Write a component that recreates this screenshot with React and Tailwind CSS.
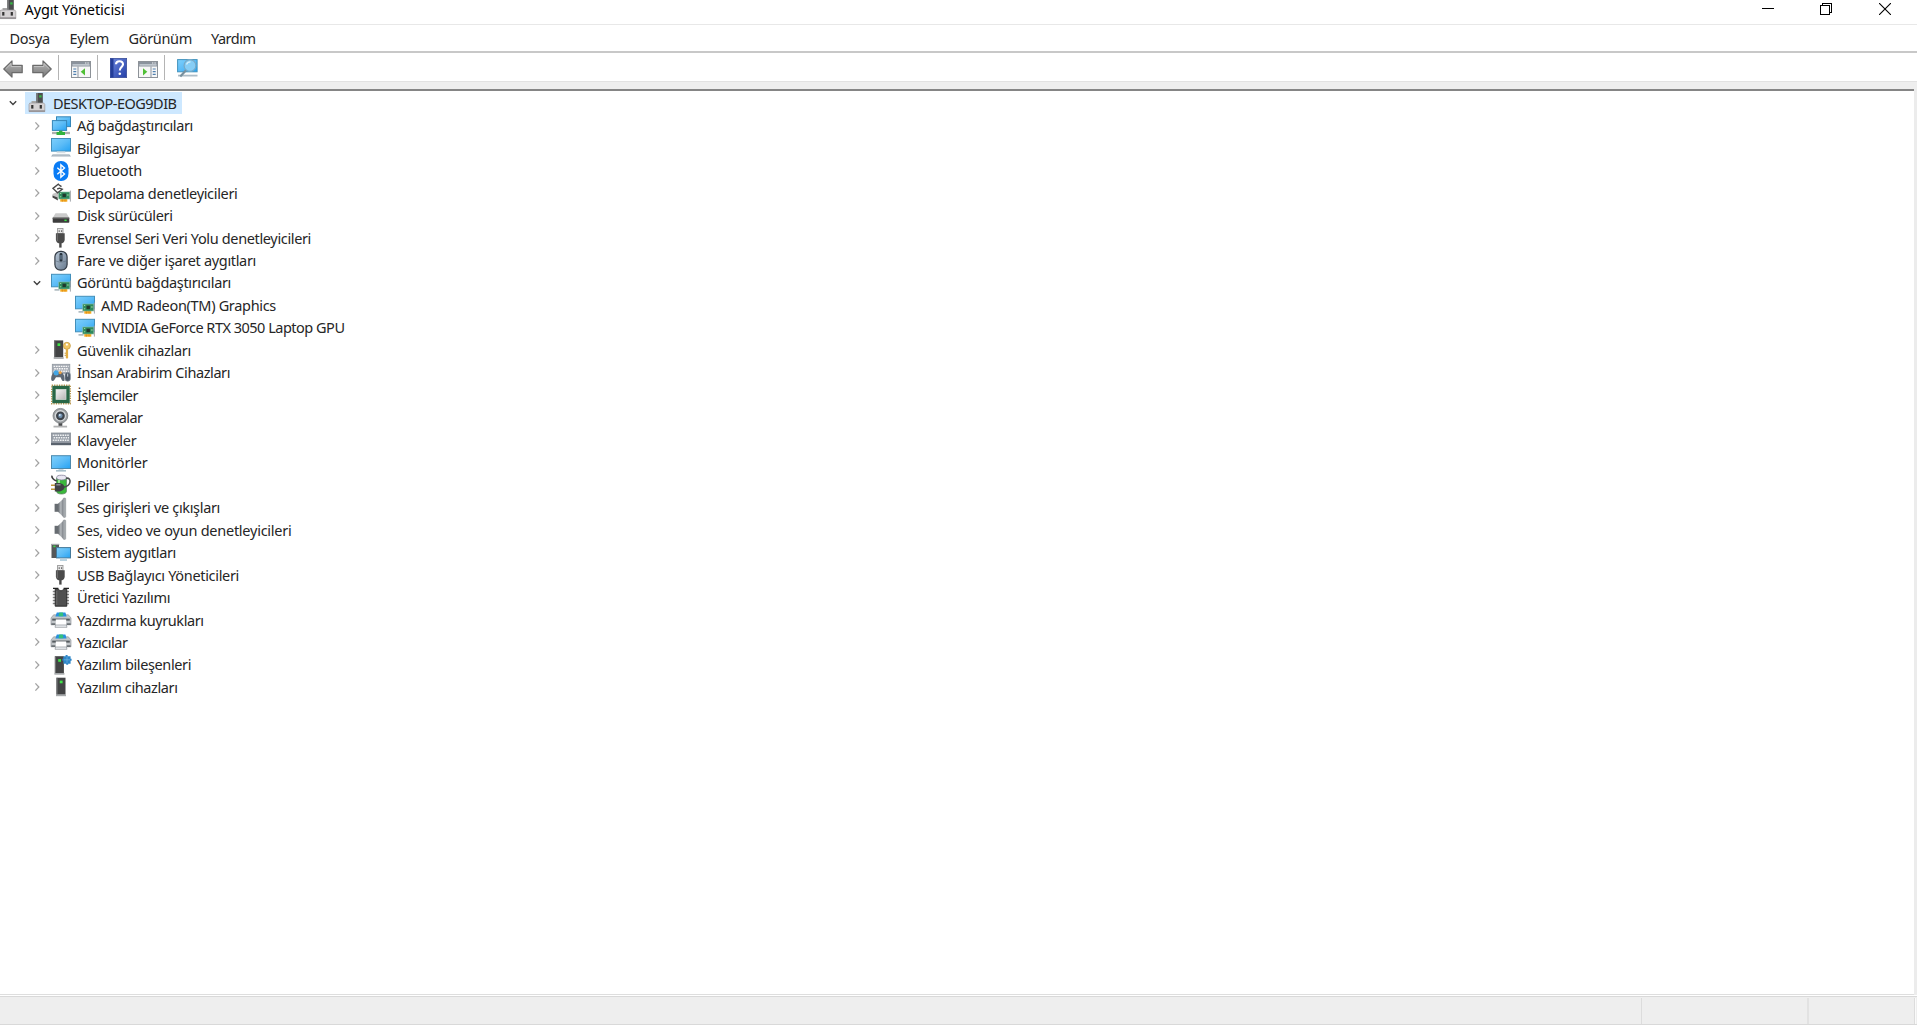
import { useLayoutEffect, useRef } from "react";

function Label({ children, width, size = "text-[14.5px]", className = "" }) {
  const ref = useRef(null);
  useLayoutEffect(() => {
    const el = ref.current;
    const fit = () => {
      el.style.letterSpacing = "0px";
      const natural = el.getBoundingClientRect().width;
      el.style.letterSpacing = `${(width - natural) / el.textContent.length}px`;
    };
    fit();
    document.fonts?.ready.then(fit);
  }, [width]);
  return (
    <span ref={ref} className={`inline-block whitespace-pre ${size} ${className}`}>
      {children}
    </span>
  );
}

const Svg = ({ children, className = "h-5 w-5" }) => (
  <svg viewBox="0 0 20 20" className={`${className} block shrink-0 overflow-visible`} fill="none">
    {children}
  </svg>
);

const Defs = () => (
  <svg className="absolute h-0 w-0">
    <defs>
      <linearGradient id="blue" x1="0" y1="0" x2="1" y2="1">
        <stop offset="0" stopColor="#7fd0fb" />
        <stop offset=".5" stopColor="#5cbcf7" />
        <stop offset="1" stopColor="#25a2f3" />
      </linearGradient>
      <linearGradient id="horn" x1="0" y1="0" x2="1" y2="0">
        <stop offset="0" stopColor="#62676c" />
        <stop offset=".5" stopColor="#b4b8bc" />
        <stop offset="1" stopColor="#74797e" />
      </linearGradient>
      <linearGradient id="arrow" x1="0" y1="0" x2="0" y2="1">
        <stop offset="0" stopColor="#b8b8b8" />
        <stop offset="1" stopColor="#787878" />
      </linearGradient>
      <linearGradient id="help" x1="0" y1="0" x2="1" y2="1">
        <stop offset="0" stopColor="#6d87dc" />
        <stop offset="1" stopColor="#2440a8" />
      </linearGradient>
      <linearGradient id="mouse" x1="0" y1="0" x2="1" y2="1">
        <stop offset="0" stopColor="#b9c8d8" />
        <stop offset="1" stopColor="#66788c" />
      </linearGradient>
      <linearGradient id="silver" x1="0" y1="0" x2="1" y2="1">
        <stop offset="0" stopColor="#f4f4f4" />
        <stop offset="1" stopColor="#b5b5b5" />
      </linearGradient>
    </defs>
  </svg>
);

const Host = ({ className = "h-5 w-5" }) => (
  <Svg className={className}>
    <rect x="9.4" y="0" width="6.4" height="12" fill="#4b4d4e" />
    <rect x="9.4" y="0" width="1.6" height="12" fill="#727475" />
    <rect x="12.2" y="2.3" width="2.4" height="2.2" fill="#35b944" />
    <path d="M4.5 8h4.5v2.6H4.5z" fill="#a8a8a8" />
    <path d="M2.8 10h14l1 1.6v7H2v-7z" fill="#d5d2d4" stroke="#9c999b" strokeWidth=".7" />
    <path d="M2 17.2h16v1.8H2z" fill="#989598" />
    <rect x="4.2" y="12" width="2.2" height="3.6" fill="#343434" />
    <rect x="12.7" y="12" width="2.2" height="3.6" fill="#343434" />
  </Svg>
);

const Network = () => (
  <Svg>
    <rect x="5.5" y=".8" width="14" height="9.8" fill="url(#blue)" stroke="#3586b8" />
    <path d="M1 17h18" stroke="#b0b0b0" strokeWidth="2.3" />
    <rect x="1.4" y="4.6" width="14.2" height="9.8" fill="url(#blue)" stroke="#3586b8" />
    <path d="M8 14.8h3.4v1.3H14v2.8H5.5v-2.8H8z" fill="#31b33d" />
  </Svg>
);
const Computer = () => (
  <Svg>
    <rect x=".5" y=".5" width="19" height="12.6" fill="url(#blue)" stroke="#438eba" />
    <path d="M6 13.6h8l.6 1.6H5.4z" fill="#dbe1e5" />
    <path d="M2 16h16l2 2.6H0z" fill="#a3b0bb" />
    <path d="M1.8 16.8h16.4" stroke="#dce3e7" strokeWidth=".8" />
  </Svg>
);
const Monitor = () => (
  <Svg>
    <rect x=".5" y="2.7" width="19" height="12.8" fill="url(#blue)" stroke="#4b89ad" />
    <path d="M7.5 16h5v1.2h-5z" fill="#c6d4dc" />
    <path d="M5 17.2h10v1.3H5z" fill="#94b1bf" />
  </Svg>
);
const Bluetooth = () => (
  <Svg>
    <rect x="2.5" y="0" width="15" height="20" rx="7.2" fill="#0a7cf5" />
    <path d="m6.3 6.7 7.2 6.2-3.6 3.3V3.8l3.6 3.3-7.2 6.2" stroke="#fff" strokeWidth="1.4" />
  </Svg>
);
const Card = () => (
  <>
    <path d="M9.3 15.5h7v3.2h-7z" fill="#f5a81e" />
    <path d="M11.5 16v2.7M14 16v2.7" stroke="#c97d14" strokeWidth=".5" />
    <rect x="7.8" y="9" width="11" height="7" fill="#2f8a5e" stroke="#8dbfa2" strokeWidth=".6" />
    <rect x="11.5" y="10.7" width="3.4" height="3.4" fill="#21382d" />
    <path d="M9.2 10.5h1M9.2 13.8h1M16.2 12h1.4" stroke="#bde6a7" />
    <path d="M19.4 7.6v11" stroke="#9a9fa4" strokeWidth=".9" />
  </>
);
const Display = () => (
  <Svg>
    <rect x=".5" y="1.3" width="19" height="12.5" fill="url(#blue)" stroke="#438fba" />
    <path d="M3.5 16.9h5" stroke="#9cabb3" strokeWidth="1.4" />
    <Card />
  </Svg>
);
const Storage = () => (
  <Svg>
    <path d="m1.5 11 5-2 5 3-5 3.2-5-2.2z" fill="#c4c4c4" />
    <path d="m1.5 12.4 5 2 .5 3-5.5-3z" fill="#444" />
    <Card />
    <path d="M7.8.8 2 5.4l4.6 4.4 4.6-3.6-2.6-1-2.4.8" stroke="#484848" strokeWidth="1.4" />
    <path d="M7 1.2 10.5 3.6" stroke="#484848" strokeWidth="1.3" />
  </Svg>
);
const Disk = () => (
  <Svg>
    <path d="M4.5 7.3h11l2.8 4.4H1.7z" fill="#cbcbcb" />
    <rect x="1.7" y="11.5" width="16.6" height="5.3" rx=".7" fill="#3c3c3c" />
    <path d="M1.7 11.9h16.6" stroke="#858585" />
    <rect x="13.4" y="13.6" width="2.3" height="1.5" fill="#39e047" />
  </Svg>
);
const Usb = () => (
  <Svg>
    <rect x="6.6" y=".5" width="5.4" height="5" fill="#e4e4e4" stroke="#8e8e8e" strokeWidth=".8" />
    <path d="M8.2 2.3v1.6M10.6 2.3v1.6" stroke="#555" />
    <path d="M4.9 5.3h8.8v6.2c0 2-1.2 3.2-2.6 3.8H7.5c-1.4-.6-2.6-1.8-2.6-3.8z" fill="#4b4b4b" />
    <path d="M6.3 6v7" stroke="#747474" />
    <path d="M9.4 15v4.6" stroke="#484848" strokeWidth="2.4" />
  </Svg>
);
const Mouse = () => (
  <Svg>
    <rect x="3.9" y=".4" width="12.2" height="18.8" rx="5.6" fill="url(#mouse)" stroke="#333b45" strokeWidth="1.2" />
    <path d="M4 9.5c3.5 2 8.5 2 12 0" stroke="#5d6b79" strokeWidth=".6" />
    <rect x="8.6" y="2" width="2.8" height="8.4" rx="1.2" fill="#26303a" />
    <path d="M10 4v4.5" stroke="#87a5c2" strokeWidth=".9" />
  </Svg>
);
const Tower = () => (
  <>
    <rect x="5.5" y=".7" width="9" height="17" fill="#434445" />
    <path d="M6 .7v17" stroke="#707273" strokeWidth="1.2" />
    <path d="M5 17.5h10v1.7H5z" fill="#a5a8aa" />
    <rect x="8.8" y="3.6" width="2.8" height="2.7" fill="#3ee347" />
  </>
);
const Security = () => (
  <Svg>
    <g transform="translate(-2.3 -.3)">
      <Tower />
    </g>
    <circle cx="15.9" cy="5.8" r="3.5" fill="#f0c564" stroke="#c59a42" strokeWidth=".8" />
    <circle cx="15.9" cy="4.6" r="1.1" fill="#fff" />
    <path d="M14.8 9h2.3v8.4l-1.1 1.5-1.2-1.5z" fill="#e1ae46" />
    <path d="M13.6 13.2h1.5M13.6 15.3h1.5" stroke="#c59a42" />
  </Svg>
);
const Hid = () => (
  <Svg>
    <rect x="1.3" y="1.3" width="17.5" height="9" fill="#a5abb3" stroke="#9299a1" strokeWidth=".8" />
    <path d="M2.6 3.4h15M3.2 5.8h14M2.6 8.2h15" stroke="#f7f7f7" strokeWidth="1.4" strokeDasharray="1.6 .8" />
    <path d="M1.8 10.2c2-1.6 8-1.6 10 0 1.6 2.2 2 5 1.7 7.3-.8 1-2.2.6-2.7-.6l-1.3-2.7H5L3.3 17c-.8 1.2-2.6 1.2-3 0-.4-2.4.2-5 1.5-6.8z" fill="#5d6875" />
    <circle cx="5.2" cy="9.8" r="2.6" fill="#43a6e6" />
    <circle cx="9.2" cy="9.6" r="1.6" fill="#eaa24a" />
    <rect x="14" y="9.4" width="5.4" height="8.8" rx="2.5" fill="#4c5866" stroke="#8692a0" strokeWidth=".7" />
    <path d="M16.7 10.6v3" stroke="#c6cfda" />
  </Svg>
);
const Cpu = () => (
  <Svg>
    <rect x=".7" y=".2" width="18.6" height="18.6" stroke="#b7964e" strokeWidth="1.4" strokeDasharray="1.3 1.1" />
    <rect x="1.3" y=".8" width="17.4" height="17.4" fill="#286746" />
    <rect x="5" y="4.4" width="10" height="10" fill="url(#silver)" stroke="#d8dfdc" strokeWidth=".7" />
  </Svg>
);
const Camera = () => (
  <Svg>
    <path d="M7.5 14h3.8v4H7.5z" fill="#494b4d" />
    <path d="M2.5 18.6h13.6" stroke="#b1b2b3" strokeWidth="1.8" />
    <circle cx="9.4" cy="7.8" r="7.4" fill="#9ca0a3" stroke="#7b7f82" strokeWidth=".8" />
    <circle cx="9.4" cy="7.8" r="5.7" fill="#d5d8da" />
    <circle cx="9.4" cy="7.8" r="4.4" fill="#3e444b" />
    <circle cx="9.4" cy="7.8" r="2.2" fill="#7191af" />
    <circle cx="8.8" cy="7" r=".9" fill="#d8e8f7" />
  </Svg>
);
const Keyboard = () => (
  <Svg>
    <rect x=".4" y="3" width="19.2" height="11" fill="#959ca5" stroke="#8b929a" strokeWidth=".8" />
    <path d="M1.8 5.3h16.5M2.6 7.8h15.4M1.8 10.3h16.5" stroke="#eef0f2" strokeWidth="1.5" strokeDasharray="1.6 .8" />
    <path d="M0 12.9h20v2.3H0z" fill="#59626d" />
  </Svg>
);
const Battery = () => (
  <Svg>
    <path d="M5.6 3h9.8v13.6c0 3.2-9.8 3.2-9.8 0z" fill="#3ab93c" stroke="#4e7752" strokeWidth=".7" />
    <ellipse cx="10.5" cy="2.6" rx="4.9" ry="2.4" fill="#e9e7f2" stroke="#837f99" strokeWidth=".8" />
    <path d="M8 5v3.5" stroke="#a5e89c" strokeWidth="1.8" />
    <path d="M.9.6c-.3 3 2.2 4.4 4.8 5.4" stroke="#3d3e3f" strokeWidth="1.6" />
    <path d="M15 3.2c3-.6 4.4 1.4 4 3.8-.4 2.8-3.2 4.8-7 5.2" stroke="#4b4e50" strokeWidth="1.6" />
    <path d="M0 10.2h4.5M0 14.3h4.5" stroke="#bc963a" strokeWidth="1.5" />
    <path d="M3.8 8h3.6c3 0 6 1.6 6 4.2s-3 4.2-6 4.2H3.8z" fill="#3f4245" />
    <path d="M5.3 9.8h4.2" stroke="#989c9e" strokeWidth="1.2" />
  </Svg>
);
const Speaker = () => (
  <Svg>
    <rect x="3.6" y="5.8" width="3.6" height="8" fill="#676c71" />
    <path d="M7 5.8 12.6.4v18.8L7 13.8z" fill="url(#horn)" />
    <rect x="12.2" y="0" width="2.5" height="19.4" rx=".8" fill="#a3a8ac" stroke="#858a8e" strokeWidth=".5" />
  </Svg>
);
const System = () => (
  <Svg>
    <rect x=".5" y="1" width="7.5" height="14" fill="#55585a" />
    <path d="M.3 1.4h8" stroke="#a6aaad" strokeWidth="1.2" />
    <rect x="2.3" y="2.6" width="2.2" height="1.6" fill="#40d34b" />
    <rect x="5.5" y="4.6" width="14" height="10.3" fill="url(#blue)" stroke="#43799a" />
    <path d="M9 17h7" stroke="#a9c8d8" strokeWidth="1.6" />
  </Svg>
);
const Firmware = () => (
  <Svg>
    <path d="M1.8 3.5H18M1.8 6.5H18M1.8 9.5H18M1.8 12.5H18M1.8 15.5H18" stroke="#808080" strokeWidth="1.4" />
    <path d="M4.2 1.2h3.4c.4 2 4.4 2 4.8 0h3.4v17H4.2z" fill="#505050" stroke="#262626" strokeWidth=".9" />
    <path d="M2 .4h5.4M12.6.4H18" stroke="#222" strokeWidth="1.3" />
    <path d="M5.8 3v14" stroke="#747474" strokeWidth=".8" />
  </Svg>
);
const Printer = () => (
  <Svg>
    <path d="M2.6 4.8h14.8L20 8v6.8H0V8z" fill="#c2c6c9" stroke="#8a8f93" strokeWidth=".6" />
    <path d="M5.8 2.4h8.6l1.2 4.2H4.4z" fill="#2990de" />
    <path d="M8.3 2.4h3.6l.4 3.8H7.6z" fill="#35c07b" />
    <path d="M1.2 8.6h17.6v2H1.2z" fill="#555b5f" />
    <path d="M.4 13.2h4v1.8h-4zM15.6 13.2h4v1.8h-4z" fill="#6b7175" />
    <path d="M4.8 9.4h10.4v5.8H4.8z" fill="#fff" />
    <path d="M4.6 15h10.8l.6 2.3H4z" fill="#eceff1" stroke="#8e9498" strokeWidth=".7" />
  </Svg>
);
const SoftwareComponent = () => (
  <Svg>
    <g transform="translate(-1.6 .5)">
      <Tower />
    </g>
    <path d="M12.4 1.2h2.2V0h2v1.2h3v2.6h1v2h-1v3h-2.4v1h-2v-1h-2.8v-3h-1v-2h1z" fill="#2d86c8" />
    <path d="M16 1.5V8M13 4.8h6" stroke="#7dbbe2" strokeWidth=".6" />
  </Svg>
);
const SoftwareDevice = () => (
  <Svg>
    <Tower />
  </Svg>
);

const Chevron = ({ open }) => (
  <svg viewBox="0 0 10 10" className="block h-2.5 w-2.5 shrink-0" fill="none">
    {open ? (
      <path d="m1.8 3.2 3.2 3.2 3.2-3.2" stroke="#404040" strokeWidth="1.4" />
    ) : (
      <path d="m3.4 1.4 3.4 3.6-3.4 3.6" stroke="#a3a3a3" strokeWidth="1.3" />
    )}
  </svg>
);

const rows = [
  [Network, "Ağ bağdaştırıcıları", 116],
  [Computer, "Bilgisayar", 63],
  [Bluetooth, "Bluetooth", 65],
  [Storage, "Depolama denetleyicileri", 160.5],
  [Disk, "Disk sürücüleri", 95.5],
  [Usb, "Evrensel Seri Veri Yolu denetleyicileri", 234],
  [Mouse, "Fare ve diğer işaret aygıtları", 179],
  [
    Display,
    "Görüntü bağdaştırıcıları",
    154,
    [
      ["AMD Radeon(TM) Graphics", 175],
      ["NVIDIA GeForce RTX 3050 Laptop GPU", 243.5],
    ],
  ],
  [Security, "Güvenlik cihazları", 114],
  [Hid, "İnsan Arabirim Cihazları", 153],
  [Cpu, "İşlemciler", 61],
  [Camera, "Kameralar", 65.5],
  [Keyboard, "Klavyeler", 59.5],
  [Monitor, "Monitörler", 70.5],
  [Battery, "Piller", 32.5],
  [Speaker, "Ses girişleri ve çıkışları", 143],
  [Speaker, "Ses, video ve oyun denetleyicileri", 214.5],
  [System, "Sistem aygıtları", 99],
  [Usb, "USB Bağlayıcı Yöneticileri", 162],
  [Firmware, "Üretici Yazılımı", 93],
  [Printer, "Yazdırma kuyrukları", 126.5],
  [Printer, "Yazıcılar", 50.5],
  [SoftwareComponent, "Yazılım bileşenleri", 114],
  [SoftwareDevice, "Yazılım cihazları", 100.5],
];

function Row({ Icon, label, width, open }) {
  return (
    <div className="flex h-[22.48px] items-center pl-8">
      <Chevron open={open} />
      <span className="ml-[9px]">
        <Icon />
      </span>
      <Label width={width} className="-mt-px ml-[6px]">
        {label}
      </Label>
    </div>
  );
}

const PaneIcon = ({ right }) => (
  <svg viewBox="0 0 20 17" className="block h-[17px] w-5" fill="none">
    <rect x=".5" y=".5" width="19" height="16" fill="#f7f7f7" stroke="#8d9298" />
    <path d="M1 1h18v4.5H1z" fill="#8b939d" />
    <path d="M1.5 3.9h17" stroke="#d5dbe1" strokeWidth="1.2" />
    <path d="M14 2h4" stroke="#f4f4f4" strokeWidth="1.2" strokeDasharray="1 .6" />
    {right ? (
      <>
        <path d="M13 5.5v11" stroke="#8b939d" />
        <path d="M14.7 8h3M14.7 10.7h3M14.7 13.4h3" stroke="#4f7fae" strokeWidth="1.2" />
        <path d="m5 7.3 4.3 3.5L5 14.4z" fill="#4fbf35" />
      </>
    ) : (
      <>
        <path d="M7 5.5v11" stroke="#8b939d" />
        <path d="M2.3 8h3M2.3 10.7h3M2.3 13.4h3" stroke="#4f7fae" strokeWidth="1.2" />
        <path d="m14 7.3-4.3 3.5 4.3 3.6z" fill="#4fbf35" />
      </>
    )}
  </svg>
);

const Arrow = ({ flip }) => (
  <svg viewBox="0 0 20 18" className={`block h-[18px] w-5 ${flip ? "-scale-x-100" : ""}`} fill="none">
    <path d="M.8 9 9 .9v4.4h10.2v7.4H9v4.4z" fill="url(#arrow)" stroke="#6b6b6b" strokeWidth="1.2" strokeLinejoin="round" />
    <path d="M2.8 8.7 8.2 3.5v3h9.8" stroke="#cfcfcf" strokeWidth=".7" />
  </svg>
);

const Divider = ({ className }) => <span className={`h-[25px] w-px bg-[#b4b4b4] ${className}`} />;

export default function App() {
  return (
    <div className="relative flex h-[1025px] w-[1917px] flex-col overflow-hidden bg-white font-['Noto_Sans','Open_Sans',sans-serif] leading-[20px] text-[#262626]">
      <Defs />
      <header className="flex h-6 shrink-0 items-start">
        <span className="-ml-[2px]">
          <Host />
        </span>
        <Label width={100} className="-mt-px ml-[6.5px] text-black">
          Aygıt Yöneticisi
        </Label>
        <div className="ml-auto mr-[26px] mt-[3px] flex gap-[46px] text-black">
          <svg viewBox="0 0 12 12" className="h-3 w-3" shapeRendering="crispEdges">
            <path d="M0 5h12v1H0z" fill="currentColor" />
          </svg>
          <svg viewBox="0 0 12 12" className="h-3 w-3" fill="none" stroke="currentColor" shapeRendering="crispEdges">
            <path d="M.5 2.5h9v9h-9zM2.5 2.5v-2h9v9h-2" />
          </svg>
          <svg viewBox="0 0 12 12" className="ml-px h-3 w-3" fill="none" stroke="currentColor">
            <path d="m0 0 12 12M12 0 0 12" strokeWidth="1.1" />
          </svg>
        </div>
      </header>

      <nav className="flex h-[27px] shrink-0 items-center border-t border-[#e8e8e8] pl-[9.5px]">
        <Label width={40.5}>Dosya</Label>
        <Label width={39.5} className="ml-[19.5px]">Eylem</Label>
        <Label width={63.5} className="ml-[19.5px]">Görünüm</Label>
        <Label width={44.5} className="ml-[19px]">Yardım</Label>
      </nav>

      <div className="flex h-[30px] shrink-0 items-center border-t-2 border-[#c8c8c8] pl-[3px]">
        <span className="mt-[3px]">
          <Arrow />
        </span>
        <span className="ml-[9px] mt-[3px]">
          <Arrow flip />
        </span>
        <Divider className="ml-[6px] mt-px" />
        <span className="ml-3 mt-[5px]">
          <PaneIcon />
        </span>
        <Divider className="ml-[6px] mt-px" />
        <svg viewBox="0 0 17 20" className="ml-3 mt-[2px] block h-5 w-[17px] shrink-0" fill="none">
          <rect x=".4" y=".4" width="16.2" height="19.2" fill="url(#help)" stroke="#3b4f99" strokeWidth=".8" />
          <path d="M.5.5h3v19h-3z" fill="#233d98" />
          <path d="M6 6.2c.2-4 7.3-3.8 7 .2-.2 2.6-3.2 2.8-3.2 6" stroke="#fff" strokeWidth="2.1" />
          <circle cx="9.8" cy="15.8" r="1.3" fill="#fff" />
        </svg>
        <span className="ml-[11px] mt-[5px]">
          <PaneIcon right />
        </span>
        <Divider className="ml-[6px] mt-px" />
        <svg viewBox="0 0 21 20" className="ml-3 mt-[2px] block h-5 w-[21px] shrink-0" fill="none">
          <rect x=".6" y="1.6" width="19.5" height="12.2" fill="url(#blue)" stroke="#4393bd" />
          <path d="M1 17.6h19.5" stroke="#aebdc7" strokeWidth="1.8" />
          <path d="m9.3 12-6 6.5" stroke="#78909e" strokeWidth="2.2" />
          <circle cx="13" cy="7.5" r="5.9" fill="#86cdf5" stroke="#78a9c6" strokeWidth="1.2" />
          <path d="M9.5 6.5c.7-2 2-2.8 4-2.7" stroke="#d5f0fd" strokeWidth="1.3" />
        </svg>
      </div>

      <div className="h-2 shrink-0 border-t border-[#e2e2e2] bg-[#eeeeee]" />

      <main className="flex min-h-0 flex-1 bg-[#ececec] pr-[3px]">
        <div className="w-full border-b border-t-2 border-b-[#dedede] border-t-[#858585] bg-white pt-[1px]">
          <div className="flex h-[22.48px] items-center pl-2">
            <Chevron open />
            <div className="ml-[7px] flex h-full w-[157px] items-center bg-[#cde8ff] pl-[1.5px]">
              <Host />
              <Label width={123.5} className="-mt-px ml-[6.5px]">
                DESKTOP-EOG9DIB
              </Label>
            </div>
          </div>
          {rows.map(([Icon, label, width, children]) => (
            <div key={label}>
              <Row Icon={Icon} label={label} width={width} open={!!children} />
              {children?.map(([name, w]) => (
                <div key={name} className="flex h-[22.48px] items-center pl-[75px]">
                  <Display />
                  <Label width={w} className="-mt-px ml-[6px]">
                    {name}
                  </Label>
                </div>
              ))}
            </div>
          ))}
        </div>
      </main>

      <footer className="flex h-[30px] shrink-0 border-t border-white bg-[#eeeeee]">
        <div className="flex flex-1 border-b border-t border-[#d9d9d9] pt-px">
          <div className="w-[1642px] border-r border-[#dcdcdc]" />
          <div className="w-[167px] border-r-2 border-[#e2e2e2]" />
          <div className="w-[106px] border-r border-[#dcdcdc]" />
          <div className="w-px bg-[#fafafa]" />
        </div>
      </footer>
    </div>
  );
}
